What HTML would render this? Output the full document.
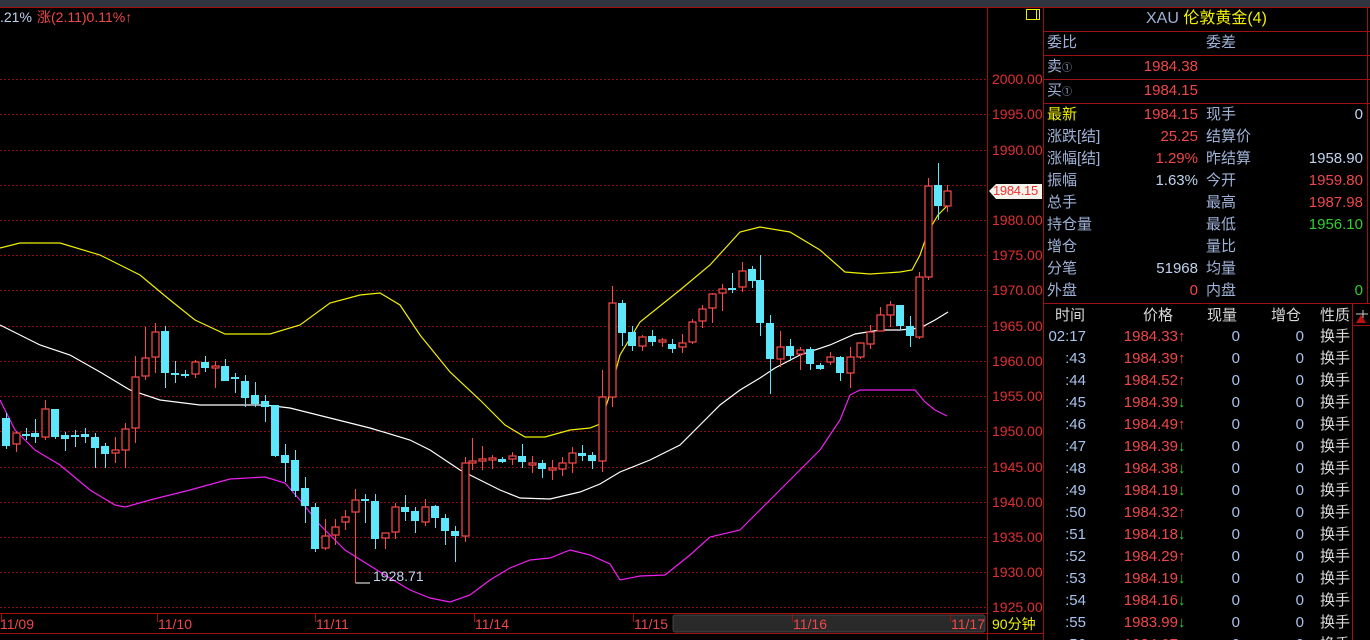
<!DOCTYPE html>
<html><head><meta charset="utf-8"><style>
*{margin:0;padding:0;box-sizing:border-box}
html{width:1370px;height:640px;overflow:hidden}
body{width:1370px;height:640px;background:#000;overflow:hidden;position:relative;font-family:"Liberation Sans","Noto Sans CJK SC",sans-serif;}
.t{position:absolute;white-space:nowrap;font-size:15px;line-height:18px}
.lb{color:#9fb3d8}
.rd{color:#f04848}
.bl{color:#c0d4f0}
.gr{color:#30d030}
.yl{color:#f0f000}
.wh{color:#d8d8d8}
.r{text-align:right}
.ax{position:absolute;left:992px;font-size:14px;color:#e03030;line-height:16px}
.row{height:22px;position:relative}
.row div{position:absolute;top:0;font-size:15px;line-height:18px;white-space:nowrap}
.tm{right:266px;color:#a8c4ee}
.pr{right:174px;color:#f04848}
.ar{left:134px;font-size:15px!important}
.v1{color:#a8c4ee}
.xz{left:276px;color:#d8d8d8}
</style></head><body>
<div style="position:absolute;left:0;top:0;width:1370px;height:7px;background:#30353f"></div>
<div style="position:absolute;left:0;top:7px;width:1370px;height:1px;background:#a01010"></div>

<svg style="position:absolute;left:0;top:0" width="1370" height="640">
<g stroke="#8a1010" stroke-dasharray="2,2" stroke-width="1">
<line x1="0" y1="79.5" x2="987" y2="79.5"/><line x1="0" y1="114.5" x2="987" y2="114.5"/><line x1="0" y1="150.5" x2="987" y2="150.5"/><line x1="0" y1="185.5" x2="987" y2="185.5"/><line x1="0" y1="220.5" x2="987" y2="220.5"/><line x1="0" y1="255.5" x2="987" y2="255.5"/><line x1="0" y1="290.5" x2="987" y2="290.5"/><line x1="0" y1="326.5" x2="987" y2="326.5"/><line x1="0" y1="361.5" x2="987" y2="361.5"/><line x1="0" y1="396.5" x2="987" y2="396.5"/><line x1="0" y1="431.5" x2="987" y2="431.5"/><line x1="0" y1="467.5" x2="987" y2="467.5"/><line x1="0" y1="502.5" x2="987" y2="502.5"/><line x1="0" y1="537.5" x2="987" y2="537.5"/><line x1="0" y1="572.5" x2="987" y2="572.5"/><line x1="0" y1="607.5" x2="987" y2="607.5"/>
</g>
<g fill="none" stroke-width="1.2">
<polyline stroke="#f0f000" points="0,248 20,243 60,243 100,255 140,275 170,300 195,320 225,334 270,334 300,325 330,303 360,295 380,293 400,305 420,335 450,372 480,400 505,425 525,437 545,437 570,430 590,428 600,424 608,400 620,355 640,322 680,290 710,265 740,232 760,227 790,232 820,250 845,272 870,274 900,272 912,270 920,255 928,232 938,215 948,205"/>
<polyline stroke="#ffffff" points="0,325 40,345 70,355 100,372 130,390 160,400 200,405 230,405 265,405 290,408 330,418 370,428 410,440 430,450 460,470 500,490 520,498 550,499 580,492 600,484 620,472 650,460 680,445 700,425 720,405 740,390 760,378 775,368 800,355 830,345 855,334 880,330 900,330 920,328 935,320 948,312"/>
<polyline stroke="#f020f0" points="0,400 15,430 35,450 60,465 90,490 115,505 125,507 150,500 190,490 230,479 265,477 285,483 300,500 320,525 345,550 380,572 410,590 430,598 450,602 470,595 490,580 510,568 530,560 550,558 570,550 590,555 610,564 620,580 640,576 665,575 690,555 710,537 740,530 770,500 800,470 820,450 840,420 850,395 860,390 890,390 915,390 925,402 935,410 947,416"/>
</g>
<path stroke="#ff4a4a" stroke-width="1" fill="none" d="M16.5 432V452M45.5 400V440M115.5 437V463M125.5 423V468M135.5 356V443M145.5 327V380M155.5 323V373M195.5 360V378M215.5 361V388M325.5 519V550M335.5 519V545M345.5 510V530M355.5 489V583M385.5 533V549M395.5 503V539M425.5 499V526M465.5 457V542M472.5 438V470M482.5 446V470M492.5 455V469M512.5 452V465M532.5 456V473M552.5 460V480M562.5 457V476M572.5 447V473M602.5 370V472M612.5 286V407M642.5 335V351M662.5 338V347M682.5 334V353M692.5 319V344M702.5 305V328M712.5 293V323M722.5 284V311M742.5 262V292M780.5 331V367M800.5 347V370M830.5 352V365M850.5 347V388M860.5 343V359M870.5 325V349M880.5 307V331M890.5 301V327M919.5 272V339M928.5 178V280M947.5 185V212"/>
<g fill="#000" stroke="#ff4a4a" stroke-width="1.2">
<rect x="13" y="433" width="7" height="11"/><rect x="42" y="409" width="7" height="28"/><rect x="112" y="450" width="7" height="3"/><rect x="122" y="429" width="7" height="21"/><rect x="132" y="377" width="7" height="51"/><rect x="142" y="358" width="7" height="18"/><rect x="152" y="332" width="7" height="25"/><rect x="192" y="362" width="7" height="12"/><rect x="212" y="366" width="7" height="2"/><rect x="322" y="536" width="7" height="12"/><rect x="332" y="527" width="7" height="8"/><rect x="342" y="517" width="7" height="5"/><rect x="352" y="500" width="7" height="12"/><rect x="382" y="533" width="7" height="5"/><rect x="392" y="507" width="7" height="25"/><rect x="422" y="507" width="7" height="15"/><rect x="462" y="463" width="7" height="73"/><rect x="469" y="461" width="7" height="2"/><rect x="479" y="459" width="7" height="2"/><rect x="489" y="458" width="7" height="2"/><rect x="509" y="456" width="7" height="3"/><rect x="529" y="463" width="7" height="2"/><rect x="549" y="468" width="7" height="2"/><rect x="559" y="463" width="7" height="6"/><rect x="569" y="453" width="7" height="10"/><rect x="599" y="397" width="7" height="64"/><rect x="609" y="303" width="7" height="94"/><rect x="639" y="337" width="7" height="9"/><rect x="659" y="340" width="7" height="2"/><rect x="679" y="343" width="7" height="4"/><rect x="689" y="322" width="7" height="20"/><rect x="699" y="309" width="7" height="12"/><rect x="709" y="294" width="7" height="14"/><rect x="719" y="289" width="7" height="4"/><rect x="739" y="271" width="7" height="16"/><rect x="777" y="347" width="7" height="12"/><rect x="797" y="350" width="7" height="4"/><rect x="827" y="357" width="7" height="5"/><rect x="847" y="357" width="7" height="16"/><rect x="857" y="343" width="7" height="14"/><rect x="867" y="332" width="7" height="12"/><rect x="877" y="315" width="7" height="16"/><rect x="887" y="305" width="7" height="10"/><rect x="916" y="277" width="7" height="60"/><rect x="925" y="186" width="7" height="91"/><rect x="944" y="191" width="7" height="15"/>
</g>
<path stroke="#5ee6fa" stroke-width="1" fill="none" d="M6.5 413V449M26.5 428V440M35.5 419V443M55.5 409V439M65.5 432V451M75.5 430V447M85.5 428V443M95.5 433V468M105.5 443V468M165.5 326V388M175.5 361V383M185.5 370V378M205.5 356V372M225.5 359V381M235.5 373V393M245.5 375V407M255.5 382V407M265.5 395V422M275.5 405V457M285.5 444V482M295.5 450V497M305.5 477V523M315.5 503V552M365.5 494V523M375.5 494V549M405.5 495V521M415.5 507V533M435.5 505V528M445.5 514V545M455.5 526V562M502.5 457V463M522.5 444V468M542.5 460V478M582.5 445V461M592.5 452V469M622.5 300V346M632.5 326V351M652.5 330V346M672.5 339V353M732.5 273V293M752.5 266V288M760.5 255V336M770.5 315V394M790.5 339V361M810.5 347V370M820.5 363V370M840.5 356V381M900.5 305V330M910.5 316V347M938.5 163V220"/>
<g fill="#5ee6fa">
<rect x="2" y="418" width="8" height="28"/><rect x="22" y="434" width="8" height="2"/><rect x="31" y="433" width="8" height="4"/><rect x="51" y="409" width="8" height="28"/><rect x="61" y="435" width="8" height="4"/><rect x="71" y="435" width="8" height="2"/><rect x="81" y="434" width="8" height="3"/><rect x="91" y="437" width="8" height="11"/><rect x="101" y="446" width="8" height="8"/><rect x="161" y="331" width="8" height="42"/><rect x="171" y="373" width="8" height="2"/><rect x="181" y="374" width="8" height="2"/><rect x="201" y="362" width="8" height="6"/><rect x="221" y="366" width="8" height="15"/><rect x="231" y="377" width="8" height="2"/><rect x="241" y="381" width="8" height="17"/><rect x="251" y="395" width="8" height="9"/><rect x="261" y="401" width="8" height="6"/><rect x="271" y="405" width="8" height="51"/><rect x="281" y="455" width="8" height="8"/><rect x="291" y="460" width="8" height="31"/><rect x="301" y="488" width="8" height="18"/><rect x="311" y="507" width="8" height="42"/><rect x="361" y="499" width="8" height="2"/><rect x="371" y="501" width="8" height="38"/><rect x="401" y="507" width="8" height="5"/><rect x="411" y="511" width="8" height="10"/><rect x="431" y="506" width="8" height="12"/><rect x="441" y="518" width="8" height="13"/><rect x="451" y="531" width="8" height="5"/><rect x="498" y="459" width="8" height="3"/><rect x="518" y="456" width="8" height="6"/><rect x="538" y="463" width="8" height="6"/><rect x="578" y="453" width="8" height="3"/><rect x="588" y="455" width="8" height="6"/><rect x="618" y="303" width="8" height="30"/><rect x="628" y="332" width="8" height="14"/><rect x="648" y="336" width="8" height="6"/><rect x="668" y="344" width="8" height="5"/><rect x="728" y="288" width="8" height="2"/><rect x="748" y="269" width="8" height="12"/><rect x="756" y="280" width="8" height="43"/><rect x="766" y="323" width="8" height="36"/><rect x="786" y="346" width="8" height="10"/><rect x="806" y="349" width="8" height="15"/><rect x="816" y="365" width="8" height="4"/><rect x="836" y="357" width="8" height="16"/><rect x="896" y="305" width="8" height="21"/><rect x="906" y="326" width="8" height="10"/><rect x="934" y="185" width="8" height="21"/>
</g>
<path d="M355.5 583H370" stroke="#fff" stroke-width="1"/>
<line x1="987.5" y1="8" x2="987.5" y2="640" stroke="#a01010"/>
<line x1="1043.5" y1="8" x2="1043.5" y2="640" stroke="#a01010"/>
<line x1="0" y1="613.5" x2="987" y2="613.5" stroke="#a01010"/>
<line x1="0" y1="633.5" x2="1043" y2="633.5" stroke="#a01010"/>
<rect x="673" y="615" width="312" height="17" rx="2" fill="#2a2a2a" stroke="#444"/>
<g stroke="#a01010"><line x1="1.5" y1="614" x2="1.5" y2="622"/><line x1="157.5" y1="614" x2="157.5" y2="622"/><line x1="315.5" y1="614" x2="315.5" y2="622"/><line x1="474.5" y1="614" x2="474.5" y2="622"/><line x1="633.5" y1="614" x2="633.5" y2="622"/><line x1="792.5" y1="614" x2="792.5" y2="622"/><line x1="950.5" y1="614" x2="950.5" y2="622"/></g>
<rect x="1026.5" y="9.5" width="13" height="10" fill="none" stroke="#f0f000"/>
<line x1="1036.5" y1="9.5" x2="1036.5" y2="19.5" stroke="#f0f000"/>
<path d="M989 191 L996 184 H1042 V199 H996 Z" fill="#f4f4ec"/>
<g stroke="#a01010"><line x1="1043" y1="31.5" x2="1370" y2="31.5"/><line x1="1043" y1="55.5" x2="1370" y2="55.5"/><line x1="1043" y1="79.5" x2="1370" y2="79.5"/><line x1="1043" y1="103.5" x2="1370" y2="103.5"/><line x1="1043" y1="303.5" x2="1370" y2="303.5"/><line x1="1367.5" y1="8" x2="1367.5" y2="303"/><line x1="1352.5" y1="303" x2="1352.5" y2="640"/><line x1="1352" y1="325.5" x2="1370" y2="325.5"/></g>
<path d="M1356 314H1368M1363 310V318" stroke="#ccc"/>
<path d="M1356 323L1361 315L1366 323Z" fill="#c01010"/>
</svg>

<div class="t bl" style="left:0;top:8px;font-size:14px">.21%</div>
<div class="t rd" style="left:37px;top:8px;font-size:14px">涨(2.11)0.11%↑</div>
<div class="t bl" style="left:373px;top:567px;font-size:14px">1928.71</div>

<div class="ax" style="top:71px">2000.00</div><div class="ax" style="top:106px">1995.00</div><div class="ax" style="top:142px">1990.00</div><div class="ax" style="top:212px">1980.00</div><div class="ax" style="top:247px">1975.00</div><div class="ax" style="top:282px">1970.00</div><div class="ax" style="top:318px">1965.00</div><div class="ax" style="top:353px">1960.00</div><div class="ax" style="top:388px">1955.00</div><div class="ax" style="top:423px">1950.00</div><div class="ax" style="top:459px">1945.00</div><div class="ax" style="top:494px">1940.00</div><div class="ax" style="top:529px">1935.00</div><div class="ax" style="top:564px">1930.00</div><div class="ax" style="top:599px">1925.00</div>
<div class="ax" style="top:183px;left:993px;color:#f03030;font-size:13px;letter-spacing:-0.3px">1984.15</div>

<div class="t rd" style="left:0;top:615px;font-size:14px">11/09</div>
<div class="t rd" style="left:158px;top:615px;font-size:14px">11/10</div>
<div class="t rd" style="left:316px;top:615px;font-size:14px">11/11</div>
<div class="t rd" style="left:475px;top:615px;font-size:14px">11/14</div>
<div class="t rd" style="left:634px;top:615px;font-size:14px">11/15</div>
<div class="t rd" style="left:793px;top:615px;font-size:14px">11/16</div>
<div class="t rd" style="left:951px;top:615px;font-size:14px">11/17</div>
<div class="t yl" style="left:992px;top:615px;font-size:14px">90分钟</div>

<div class="t" style="left:1146px;top:10px;font-size:16px"><span class="lb">XAU </span><span class="yl">伦敦黄金(4)</span></div>
<div class="t lb" style="left:1047px;top:34px">委比</div><div class="t lb" style="left:1206px;top:34px">委差</div>
<div class="t lb" style="left:1047px;top:58px">卖<span style="font-size:10px">①</span></div><div class="t rd r" style="left:1100px;width:98px;top:58px">1984.38</div>
<div class="t lb" style="left:1047px;top:82px">买<span style="font-size:10px">①</span></div><div class="t rd r" style="left:1100px;width:98px;top:82px">1984.15</div>

<div class="t yl" style="left:1047px;top:106px">最新</div><div class="t rd r" style="left:1100px;width:98px;top:106px">1984.15</div><div class="t lb" style="left:1206px;top:106px">现手</div><div class="t bl r" style="left:1260px;width:103px;top:106px">0</div>
<div class="t lb" style="left:1047px;top:128px">涨跌[结]</div><div class="t rd r" style="left:1100px;width:98px;top:128px">25.25</div><div class="t lb" style="left:1206px;top:128px">结算价</div>
<div class="t lb" style="left:1047px;top:150px">涨幅[结]</div><div class="t rd r" style="left:1100px;width:98px;top:150px">1.29%</div><div class="t lb" style="left:1206px;top:150px">昨结算</div><div class="t bl r" style="left:1260px;width:103px;top:150px">1958.90</div>
<div class="t lb" style="left:1047px;top:172px">振幅</div><div class="t bl r" style="left:1100px;width:98px;top:172px">1.63%</div><div class="t lb" style="left:1206px;top:172px">今开</div><div class="t rd r" style="left:1260px;width:103px;top:172px">1959.80</div>
<div class="t lb" style="left:1047px;top:194px">总手</div><div class="t lb" style="left:1206px;top:194px">最高</div><div class="t rd r" style="left:1260px;width:103px;top:194px">1987.98</div>
<div class="t lb" style="left:1047px;top:216px">持仓量</div><div class="t lb" style="left:1206px;top:216px">最低</div><div class="t gr r" style="left:1260px;width:103px;top:216px">1956.10</div>
<div class="t lb" style="left:1047px;top:238px">增仓</div><div class="t lb" style="left:1206px;top:238px">量比</div>
<div class="t lb" style="left:1047px;top:260px">分笔</div><div class="t bl r" style="left:1100px;width:98px;top:260px">51968</div><div class="t lb" style="left:1206px;top:260px">均量</div>
<div class="t lb" style="left:1047px;top:282px">外盘</div><div class="t rd r" style="left:1100px;width:98px;top:282px">0</div><div class="t lb" style="left:1206px;top:282px">内盘</div><div class="t gr r" style="left:1260px;width:103px;top:282px">0</div>

<div class="t wh" style="left:1055px;top:307px">时间</div><div class="t wh" style="left:1143px;top:307px">价格</div><div class="t wh" style="left:1207px;top:307px">现量</div><div class="t wh" style="left:1271px;top:307px">增仓</div><div class="t wh" style="left:1320px;top:307px">性质</div>

<div style="position:absolute;left:1044px;top:328px;width:308px;height:312px;overflow:hidden">
<div class="row"><div class="tm">02:17</div><div class="pr">1984.33</div><div class="ar rd">↑</div><div class="v1" style="right:112px">0</div><div class="v1" style="right:48px">0</div><div class="xz">换手</div></div>
<div class="row"><div class="tm">:43</div><div class="pr">1984.39</div><div class="ar rd">↑</div><div class="v1" style="right:112px">0</div><div class="v1" style="right:48px">0</div><div class="xz">换手</div></div>
<div class="row"><div class="tm">:44</div><div class="pr">1984.52</div><div class="ar rd">↑</div><div class="v1" style="right:112px">0</div><div class="v1" style="right:48px">0</div><div class="xz">换手</div></div>
<div class="row"><div class="tm">:45</div><div class="pr">1984.39</div><div class="ar gr">↓</div><div class="v1" style="right:112px">0</div><div class="v1" style="right:48px">0</div><div class="xz">换手</div></div>
<div class="row"><div class="tm">:46</div><div class="pr">1984.49</div><div class="ar rd">↑</div><div class="v1" style="right:112px">0</div><div class="v1" style="right:48px">0</div><div class="xz">换手</div></div>
<div class="row"><div class="tm">:47</div><div class="pr">1984.39</div><div class="ar gr">↓</div><div class="v1" style="right:112px">0</div><div class="v1" style="right:48px">0</div><div class="xz">换手</div></div>
<div class="row"><div class="tm">:48</div><div class="pr">1984.38</div><div class="ar gr">↓</div><div class="v1" style="right:112px">0</div><div class="v1" style="right:48px">0</div><div class="xz">换手</div></div>
<div class="row"><div class="tm">:49</div><div class="pr">1984.19</div><div class="ar gr">↓</div><div class="v1" style="right:112px">0</div><div class="v1" style="right:48px">0</div><div class="xz">换手</div></div>
<div class="row"><div class="tm">:50</div><div class="pr">1984.32</div><div class="ar rd">↑</div><div class="v1" style="right:112px">0</div><div class="v1" style="right:48px">0</div><div class="xz">换手</div></div>
<div class="row"><div class="tm">:51</div><div class="pr">1984.18</div><div class="ar gr">↓</div><div class="v1" style="right:112px">0</div><div class="v1" style="right:48px">0</div><div class="xz">换手</div></div>
<div class="row"><div class="tm">:52</div><div class="pr">1984.29</div><div class="ar rd">↑</div><div class="v1" style="right:112px">0</div><div class="v1" style="right:48px">0</div><div class="xz">换手</div></div>
<div class="row"><div class="tm">:53</div><div class="pr">1984.19</div><div class="ar gr">↓</div><div class="v1" style="right:112px">0</div><div class="v1" style="right:48px">0</div><div class="xz">换手</div></div>
<div class="row"><div class="tm">:54</div><div class="pr">1984.16</div><div class="ar gr">↓</div><div class="v1" style="right:112px">0</div><div class="v1" style="right:48px">0</div><div class="xz">换手</div></div>
<div class="row"><div class="tm">:55</div><div class="pr">1983.99</div><div class="ar gr">↓</div><div class="v1" style="right:112px">0</div><div class="v1" style="right:48px">0</div><div class="xz">换手</div></div>
<div class="row"><div class="tm">:56</div><div class="pr">1984.07</div><div class="ar rd">↑</div><div class="v1" style="right:112px">0</div><div class="v1" style="right:48px">0</div><div class="xz">换手</div></div>
</div>
</body></html>
